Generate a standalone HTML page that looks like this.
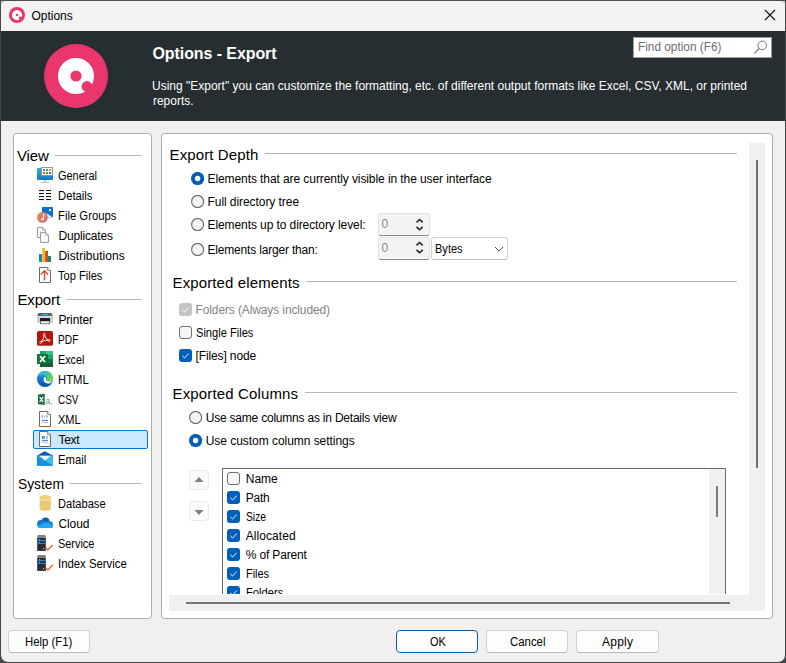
<!DOCTYPE html>
<html lang="en"><head><meta charset="utf-8"><title>Options</title>
<style>
html,body{margin:0;padding:0}
body{width:786px;height:663px;overflow:hidden;background:#44494c;position:relative;font-family:"Liberation Sans",sans-serif;font-size:12px;color:#000}
.a{position:absolute;box-sizing:border-box}
.t{position:absolute;white-space:nowrap;line-height:1;font-family:"Liberation Sans",sans-serif}
.win{left:1px;top:1px;width:784px;height:660.5px;background:#f0f0f0;border-radius:0 0 7px 7px;overflow:hidden}
.topb{left:0;top:0;width:786px;height:1px;background:#4a4f52}
.titlebar{left:0;top:0;width:784px;height:30px;background:#f3f3f3}
.header{left:0;top:30px;width:784px;height:90px;background:#262e32}
.search{left:633px;top:37px;width:139px;height:21px;background:#fff;border:1px solid #9a9fa2}
.panel{background:#fff;border:1px solid #adadad;border-radius:3.5px}
.hl{height:1px;background:#b9b9b9}
.sel{left:33px;top:430px;width:115px;height:19px;background:#cce8ff;border:1px solid #0078d4;border-radius:2px}
.ico{position:absolute;width:16px;height:16px;left:37px}
.radio{width:13px;height:13px;border-radius:50%;border:1px solid #7b7b7b;background:#f6f6f6}
.radio.on{border:3.8px solid #005fb8;background:#fff}
.cb{width:13px;height:13px;border-radius:3px;border:1px solid #6f6f6f;background:#f6f6f6}
.cb.on{border:none;background:#005fb8}
.cb.dis{border:none;background:#c4c4c4}
.cb svg{position:absolute;left:0;top:0}
.spin{width:52px;height:22px;background:#f3f3f3;border:1px solid #e3e3e3;border-bottom:1px solid #868686;border-radius:3px;box-shadow:inset 0 -1px 0 #fbfbfb}
.combo{left:431px;top:237px;width:77px;height:23px;background:#fff;border:1px solid #d2d2d2;border-bottom-color:#bdbdbd;border-radius:3px}
.sbtn{width:20px;height:20px;background:#fafafa;border:1px solid #e9e9e9;border-radius:4px}
.listbox{left:222px;top:468px;width:504px;height:140px;background:#fff;border:1px solid #696969}
.btn{height:23px;top:630px;background:#fdfdfd;border:1px solid #d0d0d0;border-bottom-color:#bcbcbc;border-radius:4px}
.btn.def{border:1px solid #005fb8;}
.sb{background:#f0f0f0}
.thumb{background:#707070}

</style></head>
<body>
<div class="a topb"></div>
<div class="a win">
<div class="a titlebar"></div>
<div class="a header"></div>
</div>
<!-- title icon -->
<svg class="a" style="left:9px;top:7px" width="16" height="16" viewBox="0 0 64 64"><circle cx="32" cy="32" r="32" fill="#e9376e"/><circle cx="32" cy="32" r="20.5" fill="#fff"/><circle cx="32" cy="32" r="5.4" fill="#e9376e"/><circle cx="45" cy="44" r="6.5" fill="#e9376e"/></svg>
<svg class="a" style="left:0;top:0" width="6" height="6" viewBox="0 0 6 6"><path d="M1 1 H4.6 L1 3.8 Z" fill="#c3c5c6"/></svg>
<svg class="a" style="left:780px;top:0" width="6" height="6" viewBox="0 0 6 6"><path d="M5 1 H1.4 L5 3.8 Z" fill="#c3c5c6"/></svg>
<!-- close X -->
<svg class="a" style="left:764px;top:9px" width="12" height="12" viewBox="0 0 12 12"><path d="M1 1 L11 11 M11 1 L1 11" stroke="#111" stroke-width="1.1" fill="none"/></svg>
<!-- logo -->
<svg class="a" style="left:44px;top:44px" width="64" height="64" viewBox="0 0 64 64"><circle cx="32" cy="32" r="32" fill="#e9376e"/><circle cx="32" cy="32" r="18" fill="#fff"/><circle cx="32" cy="32" r="5.6" fill="#e9376e"/><circle cx="43" cy="42.5" r="5.4" fill="#e9376e"/></svg>
<div class="a search"></div>
<svg class="a" style="left:752px;top:39px" width="16" height="16" viewBox="0 0 16 16"><circle cx="10.2" cy="6.4" r="4.3" fill="none" stroke="#777" stroke-width="1"/><path d="M7.2 9.5 L2.4 14.4" stroke="#777" stroke-width="1.1"/></svg>

<!-- panels -->
<div class="a panel" style="left:13px;top:133px;width:139px;height:486px"></div>
<div class="a panel" style="left:161px;top:133px;width:612px;height:486px"></div>

<!-- sidebar -->
<div class="a hl" style="left:55px;top:155px;width:87px"></div>
<div class="a hl" style="left:66px;top:299px;width:76px"></div>
<div class="a hl" style="left:70px;top:483px;width:72px"></div>
<div class="a sel"></div>
<svg class="a" style="left:37px;top:167px" width="16" height="16" viewBox="0 0 16 16"><defs><linearGradient id="gm" x1="0" y1="0" x2="0" y2="1"><stop offset="0" stop-color="#2bb4da"/><stop offset="1" stop-color="#1279c2"/></linearGradient></defs>
<rect x="0" y="1" width="16" height="12" rx="1" fill="url(#gm)"/><rect x="7.4" y="13" width="1.4" height="2.4" fill="#9db3c4"/><rect x="4" y="15.1" width="8" height="0.9" fill="#a9c0d2"/>
<rect x="4.4" y="0.4" width="11.2" height="8.2" fill="#fff" stroke="#8b8583" stroke-width="0.9"/>
<rect x="6" y="2" width="2" height="2" fill="#9a6be0"/><rect x="9" y="2" width="2" height="2" fill="#1aa99b"/><rect x="12" y="2" width="2" height="2" fill="#f5831f"/>
<rect x="6" y="5" width="2" height="2" fill="#f04e0e"/><rect x="9" y="5" width="2" height="2" fill="#1fb91f"/><rect x="12" y="5" width="2" height="2" fill="#1a78dc"/></svg>
<svg class="a" style="left:37px;top:187px" width="16" height="16" viewBox="0 0 16 16"><rect x="0.5" y="0.5" width="15" height="14.5" rx="1" fill="#f6f6f6"/>
<path d="M2 3.5h5M9 3.5h5M2 6.5h5M9 6.5h5M2 9.5h5M9 9.5h5M2 12.5h5M9 12.5h5" stroke="#111" stroke-width="1"/></svg>
<svg class="a" style="left:37px;top:207px" width="16" height="16" viewBox="0 0 16 16"><defs><linearGradient id="gf" x1="0" y1="0" x2="1" y2="1"><stop offset="0" stop-color="#e8845c"/><stop offset="0.6" stop-color="#dc7a62"/><stop offset="1" stop-color="#b86aa0"/></linearGradient></defs>
<rect x="5" y="0" width="11" height="10.5" rx="0.8" fill="#0b6fd0"/><rect x="12" y="2" width="2" height="2" fill="#fff"/>
<path d="M9 10.5 V6.4 H10 L15.9 10.5 Z" fill="#e3f0fc"/>
<circle cx="5.4" cy="10.4" r="5.4" fill="url(#gf)"/>
<path d="M6.6 7 V12" stroke="#fff" stroke-width="0.9"/><ellipse cx="5.6" cy="12.3" rx="1.3" ry="1" fill="#fff"/><path d="M6.6 7 L7.8 8.2" stroke="#fff" stroke-width="0.8"/></svg>
<svg class="a" style="left:37px;top:227px" width="16" height="16" viewBox="0 0 16 16"><path d="M0.5 0.5 H5.8 L8.5 3.2 V10.5 H0.5 Z" fill="#f7f7f7" stroke="#9c9c9c" stroke-width="1"/><path d="M5.8 0.5 V3.2 H8.5" fill="none" stroke="#9c9c9c" stroke-width="0.8"/>
<path d="M3.5 5.5 H8.8 L11.5 8.2 V15.5 H3.5 Z" fill="#f7f7f7" stroke="#9c9c9c" stroke-width="1"/><path d="M8.8 5.5 V8.2 H11.5" fill="none" stroke="#9c9c9c" stroke-width="0.8"/></svg>
<svg class="a" style="left:37px;top:247px" width="16" height="16" viewBox="0 0 16 16"><rect x="2" y="7" width="3" height="8" fill="#1b86b8"/><rect x="5" y="1" width="3" height="14" fill="#e9ba35"/><rect x="8" y="4" width="3" height="11" fill="#cf4a1c"/><rect x="11" y="9" width="3" height="6" fill="#18866a"/>
<rect x="5" y="1" width="1" height="14" fill="#f0c94c"/><rect x="8" y="4" width="1" height="11" fill="#e2581f"/></svg>
<svg class="a" style="left:37px;top:267px" width="16" height="16" viewBox="0 0 16 16"><path d="M2.5 0.5 H10.6 L13.5 3.4 V15.5 H2.5 Z" fill="#fdfdfd" stroke="#6b6b6b" stroke-width="1"/><path d="M10.6 0.5 V3.4 H13.5" fill="#fff" stroke="#6b6b6b" stroke-width="0.8"/>
<path d="M7.5 13.6 V4 M3.8 7.6 L7.5 3.8 L11.2 7.6" fill="none" stroke="#d5502e" stroke-width="1.4"/></svg>
<svg class="a" style="left:37px;top:311px" width="16" height="16" viewBox="0 0 16 16"><g transform="translate(0,0.6)"><path d="M1.6 1.3 H14.4 L16 4.5 H0 Z" fill="#5b6068"/><path d="M5 3 H11" stroke="#2fd3e4" stroke-width="1"/><rect x="13" y="3" width="1" height="1" fill="#35d335"/>
<rect x="0" y="4.5" width="16" height="7" rx="0.6" fill="#c7cfd9"/><rect x="0" y="4.5" width="16" height="1" fill="#dfe5ec"/>
<rect x="3" y="6.5" width="10" height="3.2" fill="#1d1d1f"/><rect x="3.3" y="9.4" width="9.4" height="2.8" fill="#fff" stroke="#2b2b2b" stroke-width="0.6"/></g></svg>
<svg class="a" style="left:37px;top:331px" width="16" height="16" viewBox="0 0 16 16"><rect x="0" y="0" width="16" height="15" rx="2" fill="#b5140a"/><rect x="0" y="14" width="16" height="1.3" rx="0.6" fill="#a8a0a0" opacity="0.6"/>
<path d="M7.3 3.6 Q8 7.8 12 9.4 Q7.7 8.3 3.9 11.2 Q7.1 7.8 7.3 3.6 Z" fill="none" stroke="#fff" stroke-width="0.9"/>
<circle cx="7.3" cy="3.4" r="1" fill="#b5140a" stroke="#fff" stroke-width="0.7"/><circle cx="12.1" cy="9.5" r="1" fill="#b5140a" stroke="#fff" stroke-width="0.7"/><circle cx="3.7" cy="11.4" r="1" fill="#b5140a" stroke="#fff" stroke-width="0.7"/></svg>
<svg class="a" style="left:37px;top:351px" width="16" height="16" viewBox="0 0 16 16"><rect x="3" y="0" width="6.5" height="4" fill="#21a366"/><rect x="9.5" y="0" width="6.5" height="4" fill="#33c481"/>
<rect x="3" y="4" width="6.5" height="4" fill="#107c41"/><rect x="9.5" y="4" width="6.5" height="4" fill="#21a366"/>
<rect x="3" y="8" width="6.5" height="4" fill="#0f6e3a"/><rect x="9.5" y="8" width="6.5" height="4" fill="#107c41"/>
<rect x="3" y="12" width="13" height="4" fill="#185c37"/>
<rect x="0" y="3" width="11" height="10" rx="0.6" fill="#107c41"/><rect x="0" y="3" width="11" height="10" rx="0.6" fill="#0b5a2e" opacity="0.25"/>
<path d="M3 5 L8 11 M8 5 L3 11" stroke="#fff" stroke-width="1.7"/></svg>
<svg class="a" style="left:37px;top:371px" width="16" height="16" viewBox="0 0 16 16"><defs><linearGradient id="ge1" x1="0" y1="0" x2="0" y2="1"><stop offset="0" stop-color="#2aa7e6"/><stop offset="0.5" stop-color="#1277d3"/><stop offset="1" stop-color="#0c4f9e"/></linearGradient>
<linearGradient id="ge2" x1="0" y1="0" x2="1" y2="0.6"><stop offset="0" stop-color="#2cb6e0"/><stop offset="0.5" stop-color="#35c1a5"/><stop offset="1" stop-color="#70d844"/></linearGradient></defs>
<circle cx="8" cy="8" r="8" fill="url(#ge1)"/>
<path d="M0.6 5 C2 1.8 5 0 8 0 C12.6 0 16 3.4 16 8 C16 10 14.6 11 12.8 11 C10.5 11 9.4 9.8 9.4 8.6 C9.4 7.6 9.9 7 9.9 6.2 C9.9 5 8.6 3.9 6.6 3.9 C4 3.9 1.6 4.6 0.6 5 Z" fill="url(#ge2)"/>
<path d="M6.6 8.4 C6.6 6.6 8 5.6 9.3 5.9 C8.5 7 8.6 9.3 10.6 10.3 C12.1 11 14 10.7 15.2 9.9 C14.2 12.2 11.2 13.1 9 12.1 C7.4 11.4 6.6 9.9 6.6 8.4 Z" fill="#fff"/></svg>
<svg class="a" style="left:37px;top:391px" width="16" height="16" viewBox="0 0 16 16"><path d="M1 3.6 L7.8 2.8 V14.1 L1 13.2 Z" fill="#1e7145"/><path d="M2.7 6 L6.2 11 M6.2 6 L2.7 11" stroke="#fff" stroke-width="1.3"/>
<text x="8.6" y="13.3" font-family="Liberation Sans, sans-serif" font-size="8.5" fill="#5fa47e">a,</text></svg>
<svg class="a" style="left:37px;top:411px" width="16" height="16" viewBox="0 0 16 16"><path d="M2.5 0.5 H10.6 L13.5 3.4 V15.5 H2.5 Z" fill="#fdfdfd" stroke="#6b6b6b" stroke-width="1"/><path d="M10.6 0.5 V3.4 H13.5" fill="#fff" stroke="#6b6b6b" stroke-width="0.8"/>
<path d="M6 4.2 L4.4 5.4 L6 6.6 M9 4.2 L10.6 5.4 L9 6.6" fill="none" stroke="#3a8ee6" stroke-width="0.8"/><rect x="7" y="5" width="1" height="0.9" fill="#3a8ee6"/>
<path d="M5 9.4 H11" stroke="#2b7fe0" stroke-width="1"/><path d="M5 11.4 H11" stroke="#b5b5b5" stroke-width="0.8"/></svg>
<svg class="a" style="left:37px;top:431px" width="16" height="16" viewBox="0 0 16 16"><path d="M2.5 0.5 H10.6 L13.5 3.4 V15.5 H2.5 Z" fill="#fdfdfd" stroke="#6b6b6b" stroke-width="1"/><path d="M10.6 0.5 V3.4 H13.5" fill="#fff" stroke="#6b6b6b" stroke-width="0.8"/>
<rect x="5" y="5.2" width="2.8" height="2.5" fill="#2b88d8"/><path d="M9 5.6 H11 M9 7.4 H11" stroke="#30b0f0" stroke-width="0.9"/>
<path d="M5 9.4 H11" stroke="#2b7fe0" stroke-width="1"/><path d="M5 11.4 H11" stroke="#b5b5b5" stroke-width="0.8"/></svg>
<svg class="a" style="left:37px;top:451px" width="16" height="16" viewBox="0 0 16 16"><path d="M0 4.6 L7.8 0.2 L16 4.6 Z" fill="#0a5cb0"/><rect x="0" y="4.5" width="16" height="10.2" fill="#28a8ea"/>
<path d="M16 4.5 V14.7 L7.5 9.5 Z" fill="#35c0f0"/><path d="M0 4.5 L16 14.7 H0 Z" fill="#1490df"/>
<path d="M1.6 4.6 H14.4 L8 9.4 Z" fill="#f3f1ef"/><path d="M0 4.5 H16" stroke="#0a5cb0" stroke-width="0.5"/></svg>
<svg class="a" style="left:37px;top:495px" width="16" height="16" viewBox="0 0 16 16"><path d="M2.6 2.2 V13.8 C2.6 16.6 13.8 16.6 13.8 13.8 V2.2 Z" fill="#e9ca70"/><ellipse cx="8.2" cy="2.2" rx="5.6" ry="2.1" fill="#ecd07c"/>
<path d="M2.9 3.6 C3.5 5.6 12.9 5.6 13.5 3.6" fill="none" stroke="#fbf3d6" stroke-width="1"/></svg>
<svg class="a" style="left:37px;top:515px" width="16" height="16" viewBox="0 0 16 16"><g transform="translate(0,0.5)"><circle cx="8.6" cy="5.8" r="3.9" fill="#0a5fb4"/><circle cx="4.2" cy="8.6" r="4.1" fill="#0f78d4"/><circle cx="12.4" cy="9" r="3.6" fill="#1490df"/>
<path d="M2.2 12.5 C0.6 12.5 0.4 10.8 1.4 10.2 L8.4 6.6 L15 10 C16.4 11 15.6 12.5 14 12.5 Z" fill="#28a8ea"/></g></svg>
<svg class="a" style="left:37px;top:535px" width="16" height="16" viewBox="0 0 16 16"><path d="M0.8 0 H8.2 L9 2.8 H0 Z" fill="#7c8188"/><rect x="0" y="2.6" width="9" height="13.4" fill="#5d6168"/><rect x="0.8" y="3" width="7.4" height="12.6" fill="#2c2c2f"/>
<path d="M1 5.6 H8 M1 8.5 H8" stroke="#1e82f0" stroke-width="1.2"/><rect x="2.1" y="4" width="1" height="1" fill="#4fd6f2"/><rect x="2.1" y="6.9" width="1" height="1" fill="#4fd6f2"/><rect x="6" y="13" width="1.2" height="1.2" fill="#4fe0f4"/>
<path d="M8.4 12.5 L10.9 14.9 L15.7 10" fill="none" stroke="#f05a14" stroke-width="1.3"/></svg>
<svg class="a" style="left:37px;top:555px" width="16" height="16" viewBox="0 0 16 16"><path d="M0.8 0 H8.2 L9 2.8 H0 Z" fill="#7c8188"/><rect x="0" y="2.6" width="9" height="13.4" fill="#5d6168"/><rect x="0.8" y="3" width="7.4" height="12.6" fill="#2c2c2f"/>
<path d="M1 5.6 H8 M1 8.5 H8" stroke="#1e82f0" stroke-width="1.2"/><rect x="2.1" y="4" width="1" height="1" fill="#4fd6f2"/><rect x="2.1" y="6.9" width="1" height="1" fill="#4fd6f2"/><rect x="6" y="13" width="1.2" height="1.2" fill="#4fe0f4"/>
<path d="M8.4 12.5 L10.9 14.9 L15.7 10" fill="none" stroke="#f05a14" stroke-width="1.3"/></svg>

<!-- right panel -->
<div class="a hl" style="left:265px;top:153px;width:472px"></div>
<div class="a hl" style="left:306px;top:281px;width:431px"></div>
<div class="a hl" style="left:305px;top:392px;width:432px"></div>

<svg class="a" style="left:191px;top:172px" width="14" height="14" viewBox="0 0 14 14"><circle cx="6.6" cy="6.5" r="6.6" fill="#005fb8"/><circle cx="6.6" cy="6.5" r="2.7" fill="#fff"/></svg>
<svg class="a" style="left:191px;top:195px" width="14" height="14" viewBox="0 0 14 14"><circle cx="6.6" cy="6.5" r="6" fill="#f4f4f4" stroke="#686868" stroke-width="1.1"/></svg>
<svg class="a" style="left:191px;top:218px" width="14" height="14" viewBox="0 0 14 14"><circle cx="6.6" cy="6.5" r="6" fill="#f4f4f4" stroke="#686868" stroke-width="1.1"/></svg>
<svg class="a" style="left:191px;top:243px" width="14" height="14" viewBox="0 0 14 14"><circle cx="6.6" cy="6.5" r="6" fill="#f4f4f4" stroke="#686868" stroke-width="1.1"/></svg>
<svg class="a" style="left:188.5px;top:411px" width="14" height="14" viewBox="0 0 14 14"><circle cx="6.6" cy="6.5" r="6" fill="#f4f4f4" stroke="#686868" stroke-width="1.1"/></svg>
<svg class="a" style="left:188.5px;top:434px" width="14" height="14" viewBox="0 0 14 14"><circle cx="6.6" cy="6.5" r="6.6" fill="#005fb8"/><circle cx="6.6" cy="6.5" r="2.7" fill="#fff"/></svg>

<div class="a cb dis" style="left:179px;top:303px"><svg width="13" height="13" viewBox="0 0 13 13"><path d="M3.4 6.9 L5.6 9 L9.6 4.7" stroke="#fff" stroke-width="0.95" fill="none"/></svg></div>
<div class="a cb" style="left:179px;top:326px"></div>
<div class="a cb on" style="left:179px;top:349px"><svg width="13" height="13" viewBox="0 0 13 13"><path d="M3.4 6.9 L5.6 9 L9.6 4.7" stroke="#fff" stroke-width="0.95" fill="none"/></svg></div>

<div class="a spin" style="left:378px;top:213px;height:23px"></div>
<div class="a spin" style="left:378px;top:237px;height:23px"></div>
<svg class="a" style="left:415px;top:216px" width="10" height="17" viewBox="0 0 10 17"><path d="M1.5 6.4 L4.6 3.5 L7.7 6.4 M1.5 10.9 L4.6 13.8 L7.7 10.9" stroke="#222" stroke-width="1.5" fill="none"/></svg>
<svg class="a" style="left:415px;top:239.3px" width="10" height="17" viewBox="0 0 10 17"><path d="M1.5 6.4 L4.6 3.5 L7.7 6.4 M1.5 10.9 L4.6 13.8 L7.7 10.9" stroke="#222" stroke-width="1.5" fill="none"/></svg>
<div class="a combo"></div>
<svg class="a" style="left:494px;top:245px" width="10" height="8" viewBox="0 0 10 8"><path d="M1 2 L5 6 L9 2" stroke="#555" stroke-width="1" fill="none"/></svg>

<div class="a sbtn" style="left:189px;top:470px"></div>
<div class="a sbtn" style="left:189px;top:501px"></div>
<svg class="a" style="left:193.5px;top:476px" width="10" height="7" viewBox="0 0 10 7"><path d="M0.4 6 L5 1 L9.6 6 Z" fill="#808080"/></svg>
<svg class="a" style="left:193.5px;top:509px" width="10" height="7" viewBox="0 0 10 7"><path d="M0.4 1 L5 6 L9.6 1 Z" fill="#808080"/></svg>

<div class="a listbox"></div>
<div class="a sb" style="left:709px;top:469px;width:16px;height:130px"></div>
<div class="a thumb" style="left:716px;top:486px;width:2px;height:31px;background:#7c7c7c"></div>
<div class="a cb" style="left:227px;top:472px"></div>
<div class="a cb on" style="left:227px;top:491px"><svg width="13" height="13" viewBox="0 0 13 13"><path d="M3.4 6.9 L5.6 9 L9.6 4.7" stroke="#fff" stroke-width="0.95" fill="none"/></svg></div>
<div class="a cb on" style="left:227px;top:510px"><svg width="13" height="13" viewBox="0 0 13 13"><path d="M3.4 6.9 L5.6 9 L9.6 4.7" stroke="#fff" stroke-width="0.95" fill="none"/></svg></div>
<div class="a cb on" style="left:227px;top:529px"><svg width="13" height="13" viewBox="0 0 13 13"><path d="M3.4 6.9 L5.6 9 L9.6 4.7" stroke="#fff" stroke-width="0.95" fill="none"/></svg></div>
<div class="a cb on" style="left:227px;top:548px"><svg width="13" height="13" viewBox="0 0 13 13"><path d="M3.4 6.9 L5.6 9 L9.6 4.7" stroke="#fff" stroke-width="0.95" fill="none"/></svg></div>
<div class="a cb on" style="left:227px;top:567px"><svg width="13" height="13" viewBox="0 0 13 13"><path d="M3.4 6.9 L5.6 9 L9.6 4.7" stroke="#fff" stroke-width="0.95" fill="none"/></svg></div>
<div class="a cb on" style="left:227px;top:586px"><svg width="13" height="13" viewBox="0 0 13 13"><path d="M3.4 6.9 L5.6 9 L9.6 4.7" stroke="#fff" stroke-width="0.95" fill="none"/></svg></div>
<span class="t" style="left:245.80px;top:473px;font-size:12px;letter-spacing:-0.079px;">Name</span>
<span class="t" style="left:245.80px;top:492px;font-size:12px;letter-spacing:-0.247px;">Path</span>
<span class="t" style="left:245.80px;top:511px;font-size:12px;transform:scaleX(0.8568);transform-origin:0 0;">Size</span>
<span class="t" style="left:245.80px;top:530px;font-size:12px;letter-spacing:0.058px;">Allocated</span>
<span class="t" style="left:245.80px;top:549px;font-size:12px;letter-spacing:-0.155px;">% of Parent</span>
<span class="t" style="left:245.80px;top:568px;font-size:12px;transform:scaleX(0.9075);transform-origin:0 0;">Files</span>
<span class="t" style="left:245.80px;top:587px;font-size:12px;transform:scaleX(0.9346);transform-origin:0 0;">Folders</span>
<div class="a" style="left:200px;top:594px;width:540px;height:6px;background:#fff"></div>
<div class="a sb" style="left:169px;top:595px;width:596px;height:16px"></div>
<div class="a thumb" style="left:186px;top:602px;width:544px;height:2px;background:#767676"></div>
<div class="a sb" style="left:749px;top:143px;width:16px;height:453px"></div>
<div class="a thumb" style="left:756px;top:160px;width:2px;height:308px"></div>

<!-- buttons -->
<div class="a btn" style="left:8px;width:82px"></div>
<div class="a btn def" style="left:396px;width:82px"></div>
<div class="a btn" style="left:486px;width:82px"></div>
<div class="a btn" style="left:576px;width:83px"></div>

<span class="t" style="left:31.50px;top:10px;font-size:12px;letter-spacing:-0.023px;">Options</span>
<span class="t" style="left:152.50px;top:46px;font-size:16px;font-weight:700;color:#fff;letter-spacing:-0.083px;">Options - Export</span>
<span class="t" style="left:151.80px;top:79px;font-size:13px;color:#fff;transform:scaleX(0.9223);transform-origin:0 0;">Using "Export" you can customize the formatting, etc. of different output formats like Excel, CSV, XML, or printed</span>
<span class="t" style="left:152.50px;top:94px;font-size:13px;color:#fff;transform:scaleX(0.9188);transform-origin:0 0;">reports.</span>
<span class="t" style="left:638.40px;top:41px;font-size:12.5px;color:#6d6d6d;transform:scaleX(0.9452);transform-origin:0 0;">Find option (F6)</span>
<span class="t" style="left:17.00px;top:148px;font-size:15px;letter-spacing:-0.138px;">View</span>
<span class="t" style="left:17.50px;top:292px;font-size:15px;letter-spacing:-0.160px;">Export</span>
<span class="t" style="left:17.50px;top:476px;font-size:15px;transform:scaleX(0.9197);transform-origin:0 0;">System</span>
<span class="t" style="left:58.40px;top:170px;font-size:12px;transform:scaleX(0.9133);transform-origin:0 0;">General</span>
<span class="t" style="left:58.40px;top:190px;font-size:12px;transform:scaleX(0.9376);transform-origin:0 0;">Details</span>
<span class="t" style="left:58.40px;top:210px;font-size:12px;transform:scaleX(0.9415);transform-origin:0 0;">File Groups</span>
<span class="t" style="left:58.40px;top:230px;font-size:12px;letter-spacing:-0.163px;">Duplicates</span>
<span class="t" style="left:58.40px;top:250px;font-size:12px;letter-spacing:0.021px;">Distributions</span>
<span class="t" style="left:58.40px;top:270px;font-size:12px;transform:scaleX(0.9244);transform-origin:0 0;">Top Files</span>
<span class="t" style="left:58.40px;top:314px;font-size:12px;letter-spacing:-0.135px;">Printer</span>
<span class="t" style="left:58.40px;top:334px;font-size:12px;transform:scaleX(0.8500);transform-origin:0 0;">PDF</span>
<span class="t" style="left:58.40px;top:354px;font-size:12px;transform:scaleX(0.8997);transform-origin:0 0;">Excel</span>
<span class="t" style="left:58.40px;top:374px;font-size:12px;transform:scaleX(0.9396);transform-origin:0 0;">HTML</span>
<span class="t" style="left:58.40px;top:394px;font-size:12px;transform:scaleX(0.8263);transform-origin:0 0;">CSV</span>
<span class="t" style="left:58.40px;top:414px;font-size:12px;transform:scaleX(0.9195);transform-origin:0 0;">XML</span>
<span class="t" style="left:58.40px;top:434px;font-size:12px;letter-spacing:-0.254px;">Text</span>
<span class="t" style="left:58.40px;top:454px;font-size:12px;transform:scaleX(0.9395);transform-origin:0 0;">Email</span>
<span class="t" style="left:58.40px;top:498px;font-size:12px;transform:scaleX(0.9265);transform-origin:0 0;">Database</span>
<span class="t" style="left:58.40px;top:518px;font-size:12px;letter-spacing:-0.072px;">Cloud</span>
<span class="t" style="left:58.40px;top:538px;font-size:12px;transform:scaleX(0.9096);transform-origin:0 0;">Service</span>
<span class="t" style="left:58.40px;top:558px;font-size:12px;transform:scaleX(0.9463);transform-origin:0 0;">Index Service</span>
<span class="t" style="left:169.50px;top:147px;font-size:15px;letter-spacing:0.121px;">Export Depth</span>
<span class="t" style="left:207.50px;top:173px;font-size:12px;letter-spacing:-0.084px;">Elements that are currently visible in the user interface</span>
<span class="t" style="left:207.50px;top:196px;font-size:12px;letter-spacing:-0.063px;">Full directory tree</span>
<span class="t" style="left:207.50px;top:219px;font-size:12px;letter-spacing:-0.089px;">Elements up to directory level:</span>
<span class="t" style="left:207.50px;top:244px;font-size:12px;letter-spacing:-0.184px;">Elements larger than:</span>
<span class="t" style="left:172.50px;top:275px;font-size:15px;letter-spacing:0.125px;">Exported elements</span>
<span class="t" style="left:195.50px;top:304px;font-size:12px;color:#838383;letter-spacing:-0.116px;">Folders (Always included)</span>
<span class="t" style="left:195.50px;top:327px;font-size:12px;transform:scaleX(0.9253);transform-origin:0 0;">Single Files</span>
<span class="t" style="left:195.50px;top:350px;font-size:12px;letter-spacing:-0.121px;">[Files] node</span>
<span class="t" style="left:172.50px;top:386px;font-size:15px;letter-spacing:0.146px;">Exported Columns</span>
<span class="t" style="left:205.75px;top:412px;font-size:12px;letter-spacing:-0.214px;">Use same columns as in Details view</span>
<span class="t" style="left:205.75px;top:435px;font-size:12px;letter-spacing:-0.045px;">Use custom column settings</span>
<span class="t" style="left:381.50px;top:218px;font-size:12px;color:#8a8a8a;">0</span>
<span class="t" style="left:381.50px;top:242px;font-size:12px;color:#8a8a8a;">0</span>
<span class="t" style="left:435.30px;top:243px;font-size:12px;transform:scaleX(0.9195);transform-origin:0 0;">Bytes</span>
<span class="t" style="left:25.40px;top:636px;font-size:12px;transform:scaleX(0.9457);transform-origin:0 0;">Help (F1)</span>
<span class="t" style="left:429.75px;top:636px;font-size:12px;transform:scaleX(0.9110);transform-origin:0 0;">OK</span>
<span class="t" style="left:509.75px;top:636px;font-size:12px;transform:scaleX(0.9502);transform-origin:0 0;">Cancel</span>
<span class="t" style="left:602.00px;top:636px;font-size:12px;letter-spacing:0.254px;">Apply</span>

</body></html>
